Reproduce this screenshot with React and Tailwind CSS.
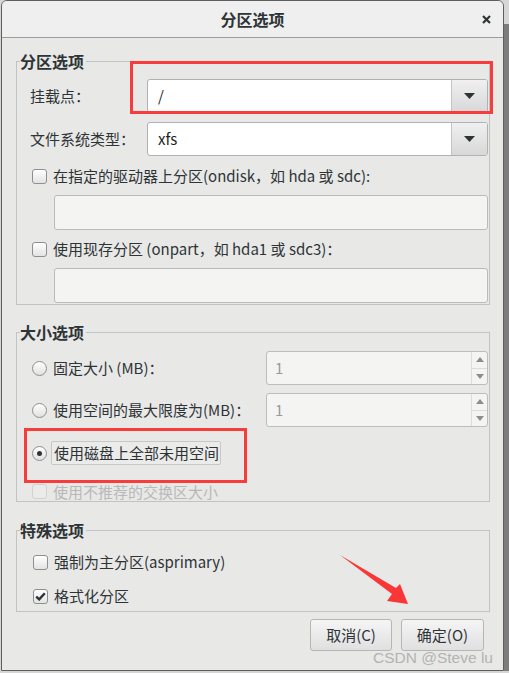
import React from "react";

const CheckBox = ({ checked, disabled }) => (
  <span
    className={
      disabled
        ? "flex h-[15px] w-[15px] shrink-0 items-center justify-center rounded-[3px] border border-[#d2d2d2] bg-[#ebebea]"
        : "flex h-[15px] w-[15px] shrink-0 items-center justify-center rounded-[3px] border border-[#8f8f8f] bg-linear-to-b from-white to-[#e3e3e3]"
    }
  >
    {checked && (
      <svg width="11" height="9" viewBox="0 0 11 9">
        <path d="M1.2 4.6 L4.2 7.4 L9.8 1.2" fill="none" stroke="#2e3436" strokeWidth="2.4" />
      </svg>
    )}
  </span>
);

const Radio = ({ on }) => (
  <span className="flex h-[15px] w-[15px] shrink-0 items-center justify-center rounded-full border border-[#8f8f8f] bg-linear-to-b from-white to-[#e1e1e1]">
    {on && <span className="h-[5px] w-[5px] rounded-full bg-[#2e3436]" />}
  </span>
);

const Combo = ({ value }) => (
  <div className="flex h-[34px] overflow-hidden rounded-[3px] border border-[#b1b1b1] bg-white">
    <div className="flex flex-1 items-center pl-[10px] text-[#1e1e1e]">{value}</div>
    <div className="flex w-[36px] items-center justify-center border-l border-[#c4c4c4] bg-linear-to-b from-[#f0f0f0] to-[#d8d8d8]">
      <svg width="11" height="6" viewBox="0 0 11 6">
        <path d="M0 0 H11 L5.5 6 Z" fill="#2e3436" />
      </svg>
    </div>
  </div>
);

const Spin = () => (
  <div className="flex h-[34px] w-[222px] overflow-hidden rounded-[3px] border border-[#bdbdbd] bg-[#f4f4f3]">
    <div className="flex flex-1 items-center pl-[8px] text-[#9a9a9a]">1</div>
    <div className="flex w-[16px] flex-col border-l border-[#dcdcdc]">
      <div className="flex flex-1 items-center justify-center border-b border-[#dcdcdc]">
        <svg width="8" height="5" viewBox="0 0 8 5">
          <path d="M0 5 H8 L4 0 Z" fill="#8d8d8d" />
        </svg>
      </div>
      <div className="flex flex-1 items-center justify-center">
        <svg width="8" height="5" viewBox="0 0 8 5">
          <path d="M0 0 H8 L4 5 Z" fill="#8d8d8d" />
        </svg>
      </div>
    </div>
  </div>
);

const Legend = ({ children }) => (
  <legend className="ml-[3px] px-0 pr-[2px] text-[16px] font-bold leading-[20px] text-[#2e3436]">
    {children}
  </legend>
);

export default function App() {
  return (
    <div className="relative flex h-[673px] w-[509px] overflow-hidden bg-[#d6d6d6] font-['Noto_Sans_CJK_SC','DejaVu_Sans',sans-serif] text-[15px] leading-[20px] text-[#2e3436]">
      <div className="ml-[1px] flex h-[671px] w-[503px] flex-col overflow-hidden rounded-t-[6px] border border-[#5e5e5e]">
        {/* title bar */}
        <div className="grid h-[37px] shrink-0 grid-cols-[1fr_auto_1fr] items-center border-b border-[#9c9c9c] bg-[#efefef]">
          <div />
          <div className="text-[16px] font-bold">分区选项</div>
          <div className="flex justify-end pr-[12px]">
            <svg width="9" height="9" viewBox="0 0 9 9">
              <path d="M1 1 L8 8 M8 1 L1 8" stroke="#2e3436" strokeWidth="2.2" />
            </svg>
          </div>
        </div>

        {/* body */}
        <div className="flex flex-1 flex-col bg-[#e8e8e7] pl-[14px] pr-[13px] pt-[13px]">
          <fieldset className="border border-[#c3c3c3] px-0">
            <Legend>分区选项</Legend>
            <div className="flex flex-col pb-[1px] pl-[13px] pr-[1px]">
              <div className="mt-[8px] grid grid-cols-[117px_1fr] items-center">
                <span>挂载点：</span>
                <Combo value="/" />
              </div>
              <div className="mt-[9px] grid grid-cols-[117px_1fr] items-center">
                <span>文件系统类型：</span>
                <Combo value="xfs" />
              </div>
              <div className="mt-[10px] flex h-[20px] items-center gap-[6px] pl-[2px]">
                <CheckBox />
                <span>在指定的驱动器上分区(ondisk，如 hda 或 sdc):</span>
              </div>
              <div className="ml-[24px] mt-[9px] h-[35px] rounded-[3px] border border-[#bababa] bg-[#f4f4f3]" />
              <div className="mt-[9px] flex h-[20px] items-center gap-[6px] pl-[2px]">
                <CheckBox />
                <span>使用现存分区 (onpart，如 hda1 或 sdc3)：</span>
              </div>
              <div className="ml-[24px] mt-[9px] h-[35px] rounded-[3px] border border-[#bababa] bg-[#f4f4f3]" />
            </div>
          </fieldset>

          <fieldset className="mt-[17px] border border-[#c3c3c3] px-0">
            <Legend>大小选项</Legend>
            <div className="flex flex-col pb-[2px] pl-[15px] pr-[1px]">
              <div className="mt-[9px] flex h-[34px] items-center justify-between">
                <div className="flex items-center gap-[6px]">
                  <Radio />
                  <span>固定大小 (MB)：</span>
                </div>
                <Spin />
              </div>
              <div className="mt-[8px] flex h-[34px] items-center justify-between">
                <div className="flex items-center gap-[6px]">
                  <Radio />
                  <span>使用空间的最大限度为(MB)：</span>
                </div>
                <Spin />
              </div>
              <div className="mt-[14px] flex h-[24px] items-center gap-[4px]">
                <Radio on />
                <span className="flex h-[24px] items-center rounded-[2px] border border-[#c8c8c8] bg-[#ebebea] pl-[2px] pr-[1px]">
                  使用磁盘上全部未用空间
                </span>
              </div>
              <div className="mt-[16px] h-[18px]">
                <div className="flex h-[20px] items-center gap-[6px] pt-[1px]">
                  <CheckBox disabled />
                  <span className="text-[#b8b8b8]">使用不推荐的交换区大小</span>
                </div>
              </div>
            </div>
          </fieldset>

          <fieldset className="mt-[18px] border border-[#c3c3c3] px-0">
            <Legend>特殊选项</Legend>
            <div className="flex flex-col pb-[5px] pl-[16px] pr-[1px]">
              <div className="mt-[12px] flex h-[20px] items-center gap-[6px]">
                <CheckBox />
                <span>强制为主分区(asprimary)</span>
              </div>
              <div className="mt-[14px] flex h-[20px] items-center gap-[6px]">
                <CheckBox checked />
                <span>格式化分区</span>
              </div>
            </div>
          </fieldset>

          <div className="mr-[6px] mt-[7px] flex justify-end gap-[9px]">
            <button className="h-[32px] w-[82px] rounded-[3px] border border-[#b6b6b6] bg-linear-to-b from-[#f5f5f5] to-[#e0e0e0] text-[15px] text-[#2e3436]">
              取消(C)
            </button>
            <button className="h-[32px] w-[83px] rounded-[3px] border border-[#b6b6b6] bg-linear-to-b from-[#f5f5f5] to-[#e0e0e0] text-[15px] text-[#2e3436]">
              确定(O)
            </button>
          </div>
        </div>
      </div>
      <div className="mt-[24px] h-[647px] w-[5px] bg-[#7d7d7d]" />

      {/* annotations drawn over the screenshot */}
      <div className="pointer-events-none absolute left-[130px] top-[61px] h-[53px] w-[363px] border-[3px] border-[#f83c3c]" />
      <div className="pointer-events-none absolute left-[24px] top-[428px] h-[55px] w-[223px] border-[3px] border-[#f83c3c]" />
      <svg className="pointer-events-none absolute left-0 top-0" width="509" height="673">
        <polygon points="340,555 396,588 400,584 408,604 387,601 392,594" fill="#fa3737" />
      </svg>
      <div className="pointer-events-none absolute left-[373px] top-[649px] font-['Liberation_Sans',Arial,sans-serif] text-[15.5px] leading-[18px] text-[#b3b3b3]">
        CSDN @Steve lu
      </div>
    </div>
  );
}
